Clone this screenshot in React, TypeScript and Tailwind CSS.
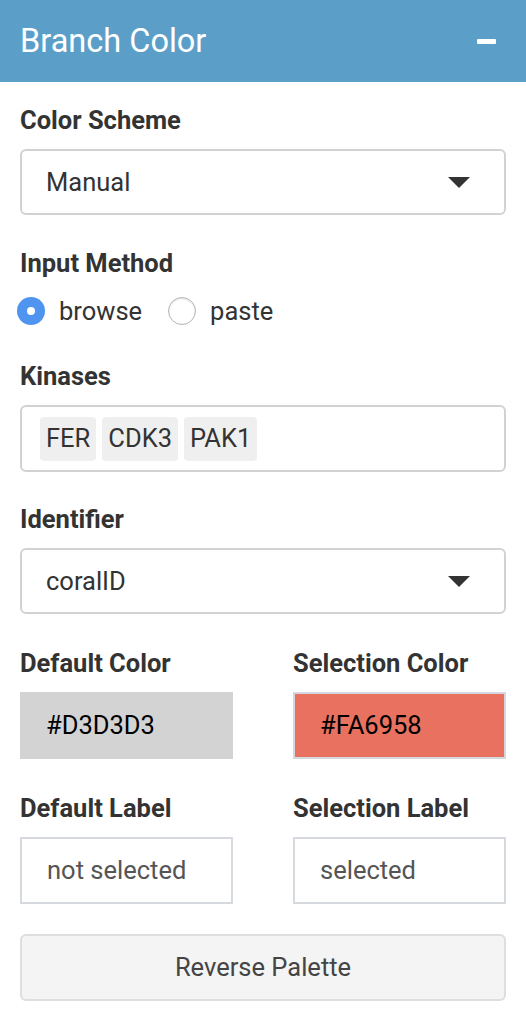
import React from "react";

function Label({ children }: { children: React.ReactNode }) {
  return <p className="text-[25.5px] leading-[28px] font-bold text-[#333] mb-[15px]">{children}</p>;
}

function Select({ value }: { value: string }) {
  return (
    <div className="h-[66px] border-2 border-[#d2d2d2] rounded-[6px] flex items-center justify-between pl-[24px] pr-[34px] bg-white">
      <span className="text-[25.5px] text-[#333]">{value}</span>
      <svg width="22" height="11" viewBox="0 0 22 11">
        <path d="M0 0 L22 0 L11 11 Z" fill="#333" />
      </svg>
    </div>
  );
}

function Radio({ checked, label }: { checked?: boolean; label: string }) {
  return (
    <div className="flex items-center h-[28px]">
      {checked ? (
        <span className="w-[28px] h-[28px] rounded-full bg-[#4f95f0] flex items-center justify-center">
          <span className="w-[8px] h-[8px] rounded-full bg-white" />
        </span>
      ) : (
        <span className="w-[28px] h-[28px] rounded-full border border-[#b5b5b5] bg-white shadow-[inset_0_1px_2px_rgba(0,0,0,0.12)]" />
      )}
      <span className="ml-[14px] text-[25.5px] leading-[28px] text-[#333]">{label}</span>
    </div>
  );
}

export default function App() {
  const kinases = ["FER", "CDK3", "PAK1"];

  return (
    <div className="w-[526px] h-[1020px] bg-white overflow-hidden" style={{ fontFamily: "Roboto, 'Liberation Sans', sans-serif" }}>
      <div className="h-[82px] bg-[#5b9fc9] px-5 flex items-center justify-between">
        <h1 className="text-[32.5px] text-white leading-none">Branch Color</h1>
        <span className="w-[19px] h-[5px] bg-white rounded-[1px] mr-[10px]" />
      </div>

      <div className="px-5 pt-[24px]">
        <Label>Color Scheme</Label>
        <Select value="Manual" />

        <div className="mt-[34px]">
          <Label>Input Method</Label>
          {/* margin collapses with the label's mb, so this is the real gap */}
          <div className="flex items-center gap-[26px] -ml-[3px] mt-[20px]">
            <Radio checked label="browse" />
            <Radio label="paste" />
          </div>
        </div>

        <div className="mt-[37px]">
          <Label>Kinases</Label>
          <div className="h-[67px] border-2 border-[#d2d2d2] rounded-[6px] flex items-center gap-[6px] pl-[18px]">
            {kinases.map((k) => (
              <span key={k} className="h-[44px] px-[6px] flex items-center rounded-[4px] bg-[#efefef] text-[25.5px] text-[#333]">
                {k}
              </span>
            ))}
          </div>
        </div>

        <div className="mt-[33px]">
          <Label>Identifier</Label>
          <Select value="coralID" />
        </div>

        <div className="grid grid-cols-2 gap-x-[60px] mt-[35px]">
          <div>
            <Label>Default Color</Label>
            <div className="h-[67px] bg-[#d3d3d3] flex items-center pl-[26px] text-[25.5px] text-black">#D3D3D3</div>
          </div>
          <div>
            <Label>Selection Color</Label>
            <div className="h-[67px] bg-[#e8715f] border-2 border-[#d4d7de] flex items-center pl-[25px] text-[25.5px] text-black">#FA6958</div>
          </div>
        </div>

        <div className="grid grid-cols-2 gap-x-[60px] mt-[35px]">
          <div>
            <Label>Default Label</Label>
            <div className="h-[67px] border-2 border-[#d6d9de] flex items-center pl-[25px] text-[25.5px] text-[#555]">not selected</div>
          </div>
          <div>
            <Label>Selection Label</Label>
            <div className="h-[67px] border-2 border-[#d6d9de] flex items-center pl-[25px] text-[25.5px] text-[#555]">selected</div>
          </div>
        </div>

        <button className="mt-[30px] w-full h-[67px] bg-[#f4f4f4] border-2 border-[#dedede] rounded-[6px] text-[25.5px] text-[#444]">
          Reverse Palette
        </button>
      </div>
    </div>
  );
}
